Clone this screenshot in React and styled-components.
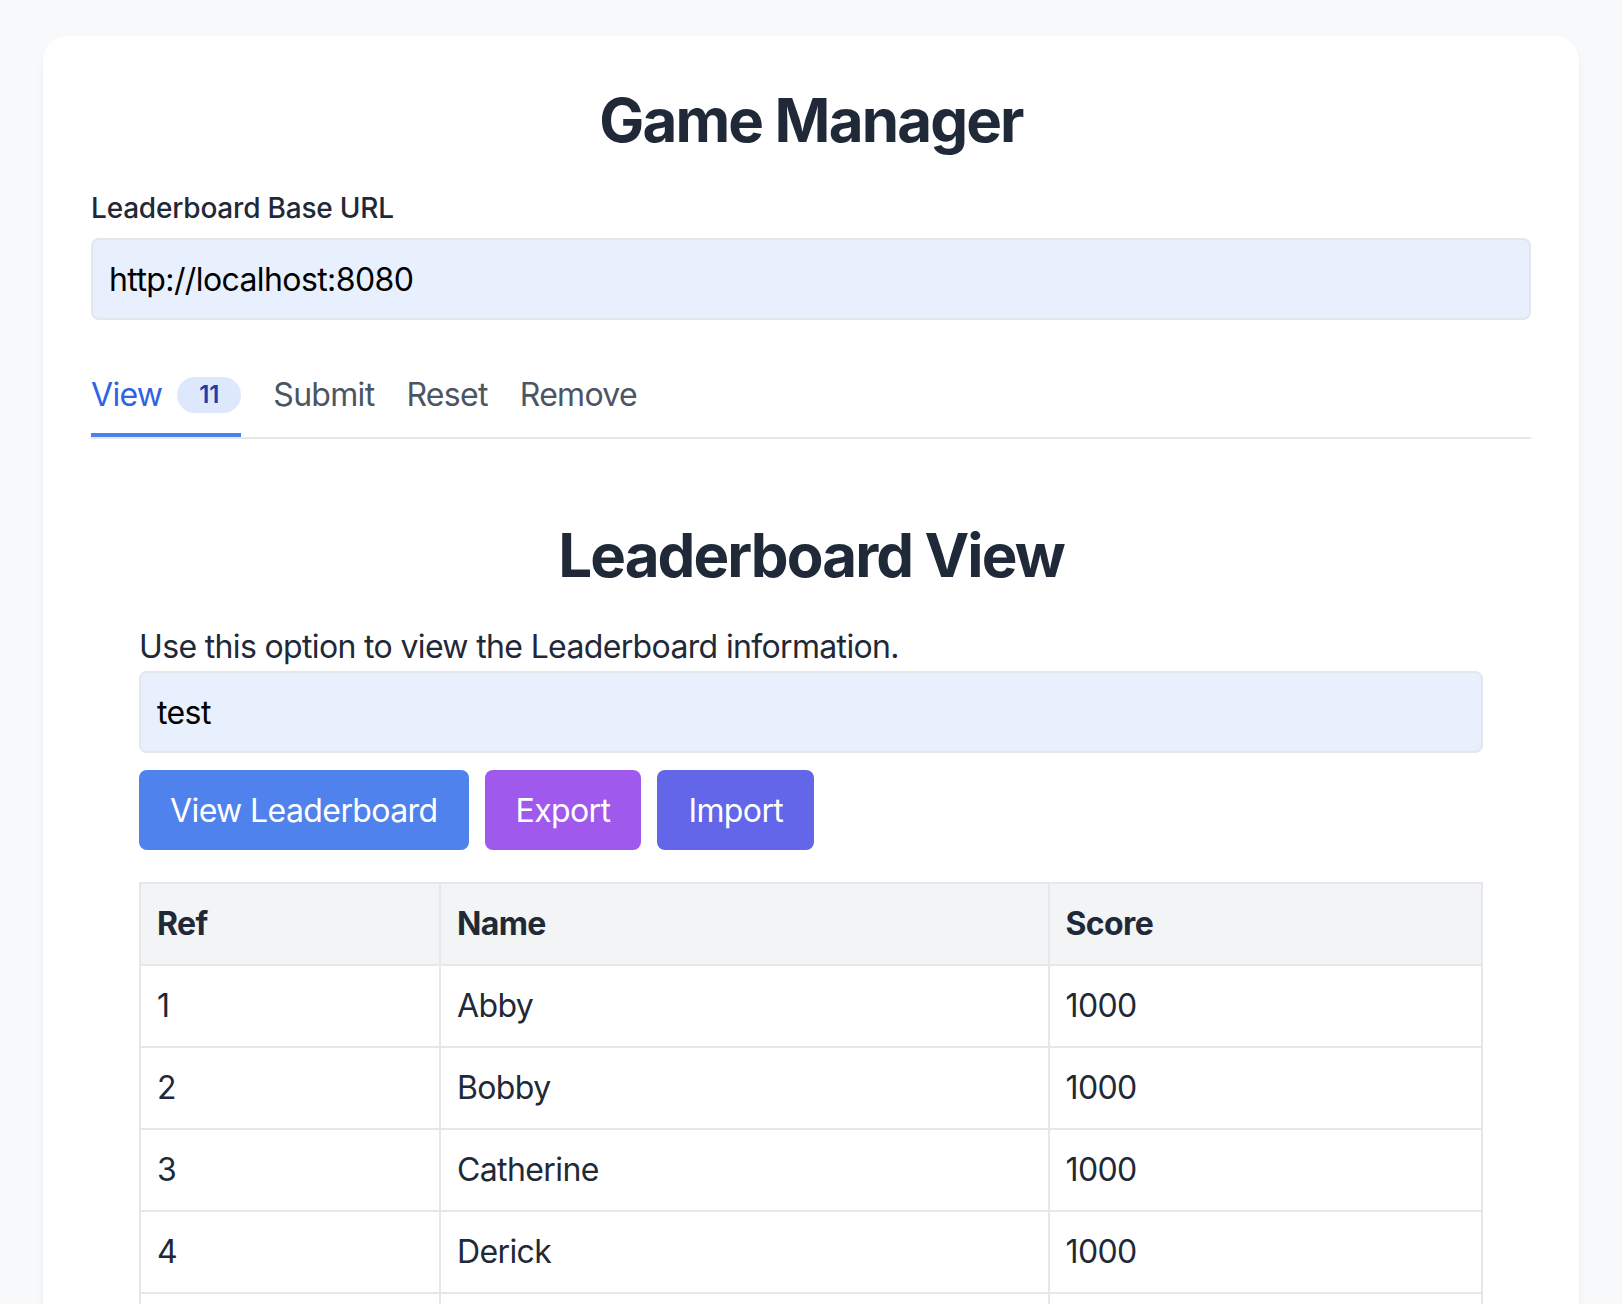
import styled, { createGlobalStyle } from "styled-components";

const GlobalStyle = createGlobalStyle`
  * {
    box-sizing: border-box;
  }

  body {
    margin: 0;
    background: #f8f9fb;
    font-family: Inter, "Liberation Sans", sans-serif;
    color: #1f2937;
  }
`;

// Layout
const Page = styled.div`
  padding: 36px 0 48px;
`;

const Card = styled.main`
  max-width: 1536px;
  margin: 0 auto;
  padding: 48px;
  background: #ffffff;
  border-radius: 24px;
  box-shadow: 0 8px 12px -2px rgba(0, 0, 0, 0.06), 0 4px 8px -4px rgba(0, 0, 0, 0.06);
`;

const Title = styled.h1`
  margin: 0 0 32px;
  font-size: 60px;
  line-height: 72px;
  font-weight: 700;
  text-align: center;
  letter-spacing: -1.85px;
  color: #1f2937;
`;

const FieldLabel = styled.label`
  display: block;
  margin-bottom: 10px;
  font-size: 28px;
  line-height: 40px;
  font-weight: 500;
  letter-spacing: -0.2px;
  color: #1f2937;
`;

const TextInput = styled.input`
  display: block;
  width: 100%;
  height: 82px;
  padding: 0 16px;
  border: 2px solid #e3e6eb;
  border-radius: 8px;
  background: #e8f0fe;
  font-family: inherit;
  font-size: 32px;
  letter-spacing: -0.6px;
  color: #000000;
  outline: none;
`;

// Tabs
const TabBar = styled.nav`
  display: flex;
  gap: 32px;
  margin-top: 55px;
  border-bottom: 2px solid #e5e7eb;
`;

const Tab = styled.button`
  display: flex;
  align-items: center;
  padding: 0 0 18px;
  border: 0;
  border-bottom: 4px solid ${(p) => (p.$active ? "#4c80ea" : "transparent")};
  background: none;
  font-family: inherit;
  font-size: 32px;
  line-height: 40px;
  letter-spacing: -0.7px;
  color: ${(p) => (p.$active ? "#2f63e3" : "#4b5563")};
  cursor: pointer;
`;

const Badge = styled.span`
  display: inline-flex;
  align-items: center;
  justify-content: center;
  height: 36px;
  min-width: 64px;
  margin-left: 15px;
  padding: 0 21px;
  border-radius: 999px;
  background: #dde8fc;
  color: #1e3fa9;
  font-size: 24px;
  font-weight: 600;
  letter-spacing: 0;
`;

// View panel
const Panel = styled.section`
  margin-top: 32px;
  padding: 48px;
`;

const PanelTitle = styled.h2`
  margin: 0 0 32px;
  font-size: 60px;
  line-height: 72px;
  font-weight: 700;
  text-align: center;
  letter-spacing: -1.9px;
  color: #1f2937;
`;

const Description = styled.p`
  margin: 0;
  font-size: 32px;
  line-height: 48px;
  letter-spacing: -0.65px;
  color: #1f2937;
`;

const Actions = styled.div`
  display: flex;
  gap: 16px;
  margin-top: 17px;
`;

const tones = {
  blue: "#4f82ec",
  purple: "#a059ed",
  indigo: "#6366e8",
};

const Button = styled.button`
  height: 80px;
  padding: 0 31px;
  border: 0;
  border-radius: 8px;
  background: ${(p) => tones[p.$tone]};
  color: #ffffff;
  font-family: inherit;
  font-size: 32px;
  letter-spacing: -0.6px;
  cursor: pointer;
`;

const Table = styled.table`
  width: 100%;
  margin-top: 32px;
  border-collapse: collapse;
  border: 2px solid #e5e7eb;
  font-size: 32px;
  line-height: 48px;
  letter-spacing: -0.6px;
  color: #1f2937;

  th,
  td {
    padding: 16px 16px;
    border: 2px solid #e5e7eb;
    text-align: left;
  }

  th {
    background: #f3f4f6;
    font-weight: 700;
  }
`;

const players = [
  "Abby",
  "Bobby",
  "Catherine",
  "Derick",
  "Elena",
  "Felix",
  "Grace",
  "Henry",
  "Isla",
  "Jack",
  "Kiera",
];

const App = () => {
  return (
    <Page>
      <GlobalStyle />
      <Card>
        <Title>Game Manager</Title>
        <FieldLabel htmlFor="base-url">Leaderboard Base URL</FieldLabel>
        <TextInput id="base-url" defaultValue="http://localhost:8080" />

        <TabBar>
          <Tab $active>
            View
            <Badge>11</Badge>
          </Tab>
          <Tab>Submit</Tab>
          <Tab>Reset</Tab>
          <Tab>Remove</Tab>
        </TabBar>

        <Panel>
          <PanelTitle>Leaderboard View</PanelTitle>
          <Description>Use this option to view the Leaderboard information.</Description>
          <TextInput defaultValue="test" />
          <Actions>
            <Button $tone="blue">View Leaderboard</Button>
            <Button $tone="purple">Export</Button>
            <Button $tone="indigo">Import</Button>
          </Actions>

          <Table>
            <colgroup>
              <col style={{ width: "22.35%" }} />
              <col style={{ width: "45.35%" }} />
              <col style={{ width: "32.3%" }} />
            </colgroup>
            <thead>
              <tr>
                <th>Ref</th>
                <th>Name</th>
                <th>Score</th>
              </tr>
            </thead>
            <tbody>
              {players.map((name, i) => (
                <tr key={name}>
                  <td>{i + 1}</td>
                  <td>{name}</td>
                  <td>1000</td>
                </tr>
              ))}
            </tbody>
          </Table>
        </Panel>
      </Card>
    </Page>
  );
};

export default App;
